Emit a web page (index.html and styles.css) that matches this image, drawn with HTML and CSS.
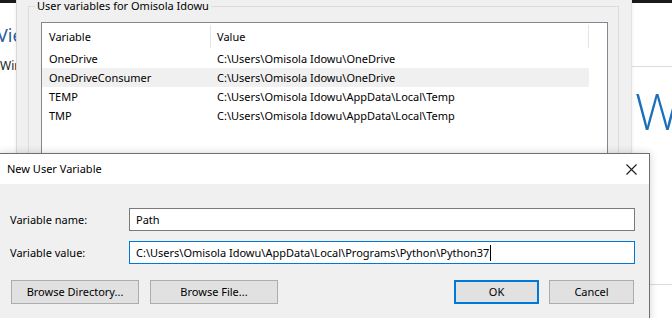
FILE: index.html
```html
<!DOCTYPE html>
<html>
<head>
<meta charset="utf-8">
<link rel="stylesheet" href="styles.css">
</head>
<body>
<div class="desktop">
  <div class="win bg-left">
    <div class="bg-left-bar"></div>
    <div class="bg-left-title">View</div>
    <div class="bg-left-sub">Windows</div>
  </div>

  <div class="win bg-right">
    <div class="bg-right-bar"></div>
    <div class="bg-right-sep"></div>
    <div class="bg-right-w">W</div>
    <div class="bg-right-sep2"></div>
  </div>

  <div class="win env">
    <fieldset class="group">
      <legend class="group-label">User variables for Omisola Idowu</legend>
      <div class="list">
        <div class="list-head">
          <div class="hcell h1">Variable</div>
          <div class="hcell h2">Value</div>
        </div>
        <div class="row"><div class="c1">OneDrive</div><div class="c2">C:\Users\Omisola Idowu\OneDrive</div></div>
        <div class="row row-hover"><div class="c1">OneDriveConsumer</div><div class="c2">C:\Users\Omisola Idowu\OneDrive</div></div>
        <div class="row"><div class="c1">TEMP</div><div class="c2">C:\Users\Omisola Idowu\AppData\Local\Temp</div></div>
        <div class="row"><div class="c1">TMP</div><div class="c2">C:\Users\Omisola Idowu\AppData\Local\Temp</div></div>
      </div>
    </fieldset>
  </div>

  <div class="win dlg">
    <div class="dlg-title">
      <span class="dlg-title-text">New User Variable</span>
      <svg class="dlg-close" width="11" height="11" viewBox="0 0 11 11"><path d="M0.5 0.5 L10.5 10.5 M10.5 0.5 L0.5 10.5" stroke="#1a1a1a" stroke-width="1.1" fill="none"/></svg>
    </div>
    <div class="dlg-body">
      <div class="field">
        <label class="field-label">Variable name:</label>
        <div class="input">Path</div>
      </div>
      <div class="field">
        <label class="field-label">Variable value:</label>
        <div class="input input-focus">C:\Users\Omisola Idowu\AppData\Local\Programs\Python\Python37<span class="caret"></span></div>
      </div>
      <div class="buttons">
        <div class="btn btn-wide">Browse Directory...</div>
        <div class="btn btn-wide">Browse File...</div>
        <div class="spacer"></div>
        <div class="btn btn-default">OK</div>
        <div class="btn">Cancel</div>
      </div>
    </div>
    <svg class="grip" width="9" height="9" viewBox="0 0 9 9">
      <rect x="7" y="1" width="1.5" height="1.5" fill="#b4b4b4"/>
      <rect x="4" y="4" width="1.5" height="1.5" fill="#b4b4b4"/>
      <rect x="7" y="4" width="1.5" height="1.5" fill="#b4b4b4"/>
      <rect x="1" y="7" width="1.5" height="1.5" fill="#b4b4b4"/>
      <rect x="4" y="7" width="1.5" height="1.5" fill="#b4b4b4"/>
      <rect x="7" y="7" width="1.5" height="1.5" fill="#b4b4b4"/>
    </svg>
  </div>
</div>
</body>
</html>
```

FILE: styles.css
```css
* { box-sizing: border-box; }
html, body { margin: 0; padding: 0; }
body {
  width: 672px;
  height: 318px;
  overflow: hidden;
  background: #ffffff;
  font-family: "Noto Sans", "Liberation Sans", sans-serif;
  font-size: 11px;
  color: #000;
}
.desktop {
  position: relative;
  width: 672px;
  height: 318px;
  overflow: hidden;
}
.win { position: absolute; }

/* background window left */
.bg-left {
  left: 0; top: 0;
  width: 40px; height: 318px;
  background: #fff;
  white-space: nowrap;
  overflow: hidden;
}
.bg-left-bar { height: 3px; background: #1b1b1b; }
.bg-left-title {
  margin-top: 21px;
  font-size: 18px;
  line-height: 22px;
  color: #2c5e9c;
  margin-left: -3px;
}
.bg-left-sub {
  margin-top: 12px;
  font-size: 12px;
  line-height: 16px;
  color: #222;
}

/* background window right */
.bg-right {
  left: 620px; top: 0;
  width: 60px; height: 318px;
  background: #fff;
  padding-left: 12px;
}
.bg-right-bar { height: 3px; background: #1b1b1b; }
.bg-right-sep { margin-top: 63px; height: 1px; background: #dcdcdc; }
.bg-right-w {
  margin-top: 14px;
  margin-left: 3px;
  font-family: "Open Sans", "Noto Sans", sans-serif;
  font-weight: 300;
  font-size: 50px;
  line-height: 60px;
  color: #1c6fb9;
}
.bg-right-sep2 { margin-top: 143px; height: 1px; background: #dcdcdc; }

/* environment variables dialog */
.env {
  left: 16px; top: 0;
  width: 616px; height: 330px;
  background: #f0f0f0;
  border-left: 1px solid #d9d9d9;
  border-right: 1px solid #e2e2e2;
  box-shadow: 0 0 4px rgba(0,0,0,0.08);
}
.group {
  margin: 0 12px 0 11px;
  padding: 0;
  border: 1px solid #dcdcdc;
  height: 320px;
}
.group-label {
  padding: 0 2px;
  margin-left: 6px;
  line-height: 12px;
  color: #000;
}
.list {
  margin: 10px 10px 0 12px;
  height: 220px;
  background: #fff;
  border: 1px solid #828790;
}
.list-head {
  display: flex;
  align-items: center;
  height: 26px;
}
.hcell {
  height: 23px;
  line-height: 23px;
  border-right: 1px solid #e5e5e5;
  white-space: nowrap;
}
.h1 { width: 169px; padding-left: 7px; }
.h2 { width: 378px; padding-left: 6px; }
.row {
  display: flex;
  height: 19px;
  line-height: 19px;
  width: 547px;
  white-space: nowrap;
}
.row-hover { background: #f0f0f0; }
.c1 { width: 168px; padding-left: 7px; }
.c2 { padding-left: 7px; }

/* new user variable dialog */
.dlg {
  left: -1px; top: 153px;
  width: 651px; height: 180px;
  background: #f0f0f0;
  border: 1px solid #6f6f6f;
  box-shadow: 0 0 8px rgba(0,0,0,0.18);
}
.dlg-title {
  height: 30px;
  background: #fff;
  display: flex;
  align-items: center;
  justify-content: space-between;
  padding: 0 12px 0 7px;
}
.dlg-title-text { line-height: 16px; }
.dlg-close { display: block; }
.dlg-body {
  padding: 24px 14px 0 10px;
  display: flex;
  flex-direction: column;
}
.field {
  display: flex;
  align-items: center;
  height: 23px;
  margin-bottom: 10px;
}
.field-label { width: 119px; }
.input {
  flex: 1;
  height: 23px;
  line-height: 21px;
  background: #fff;
  border: 1px solid #7a7a7a;
  padding: 0 6px;
  white-space: nowrap;
  display: flex;
  align-items: center;
}
.input-focus { border-color: #0078d7; }
.caret {
  display: inline-block;
  width: 1px;
  height: 16px;
  background: #000;
  margin-left: 1px;
}
.buttons {
  display: flex;
  margin-top: 6px;
  padding-left: 1px;
  padding-right: 1px;
  gap: 11px;
}
.btn {
  width: 85px;
  height: 24px;
  line-height: 22px;
  text-align: center;
  background: #e1e1e1;
  border: 1px solid #adadad;
  white-space: nowrap;
}
.btn-wide { width: 128px; }
.btn-default {
  border: 2px solid #0078d7;
  line-height: 20px;
  margin-right: -1px;
}
.spacer { flex: 1; }
.grip {
  position: absolute;
  right: 1px;
  bottom: 1px;
}
```
